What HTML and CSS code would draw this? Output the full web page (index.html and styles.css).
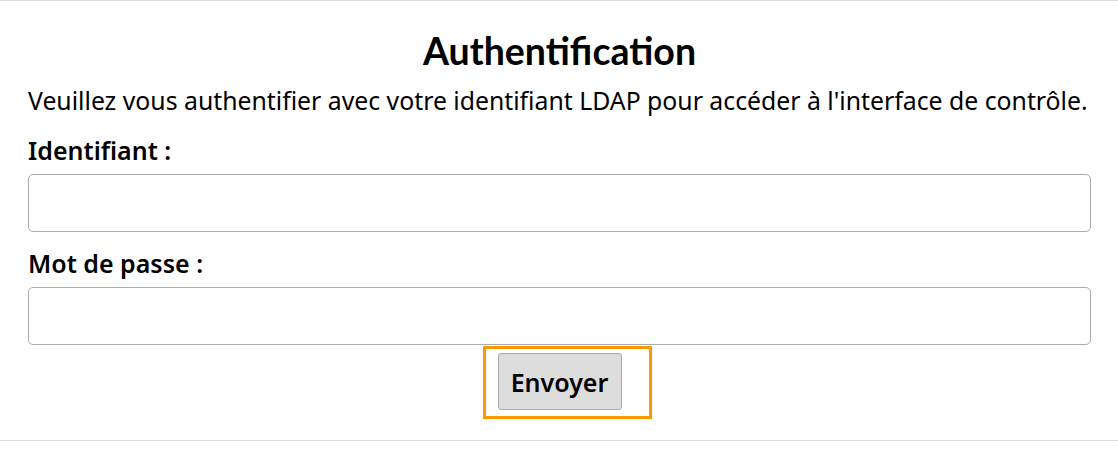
FILE: index.html
```html
<!DOCTYPE html>
<html lang="fr">
<head>
<meta charset="utf-8">
<title>Authentification</title>
<link rel="stylesheet" href="styles.css">
</head>
<body>
<main class="page">
  <h1 class="title">Authentification</h1>
  <p class="intro">Veuillez vous authentifier avec votre identifiant LDAP pour accéder à l'interface de contrôle.</p>
  <form class="form">
    <label class="label" for="login">Identifiant :</label>
    <input class="field" id="login" type="text">
    <label class="label" for="pass">Mot de passe :</label>
    <input class="field" id="pass" type="password">
    <div class="actions">
      <div class="focus-ring">
        <button class="btn" type="button">Envoyer</button>
      </div>
    </div>
  </form>
</main>
</body>
</html>
```

FILE: styles.css
```css
html, body {
  margin: 0;
  padding: 0;
  background: #fff;
}
body {
  font-family: "Noto Sans", "Open Sans", sans-serif;
  color: #000;
}
.page {
  border-top: 1px solid #dcdcdc;
  border-bottom: 1px solid #dcdcdc;
  padding: 0 27px 21px 28px;
}
.title {
  font-family: Lato, "Noto Sans", sans-serif;
  font-weight: 700;
  font-size: 37.5px;
  line-height: 44px;
  margin: 0;
  padding-top: 28px;
  text-align: center;
}
.intro {
  margin: 0;
  font-size: 24.8px;
  line-height: 30px;
  padding-top: 12px;
  padding-bottom: 4px;
}
.form {
  display: flex;
  flex-direction: column;
}
.label {
  font-weight: 600;
  font-size: 25px;
  line-height: 30px;
  padding-top: 16px;
  padding-bottom: 9px;
}
.field {
  box-sizing: border-box;
  height: 58px;
  border: 1px solid #aaa;
  border-radius: 5px;
  margin: 0;
  width: 100%;
  font: inherit;
}
.actions {
  display: flex;
  justify-content: center;
  padding-top: 1px;
}
.focus-ring {
  border: 3px solid #ff9800;
  padding: 4px 27px 6px 12px;
  margin-left: 15px;
}
.btn {
  display: block;
  box-sizing: border-box;
  height: 57px;
  width: 124px;
  background: #dddddd;
  border: 1px solid #aaa;
  border-radius: 3px;
  font-family: "Noto Sans", sans-serif;
  font-weight: 600;
  font-size: 25px;
  padding: 0;
  color: #000;
}
```
